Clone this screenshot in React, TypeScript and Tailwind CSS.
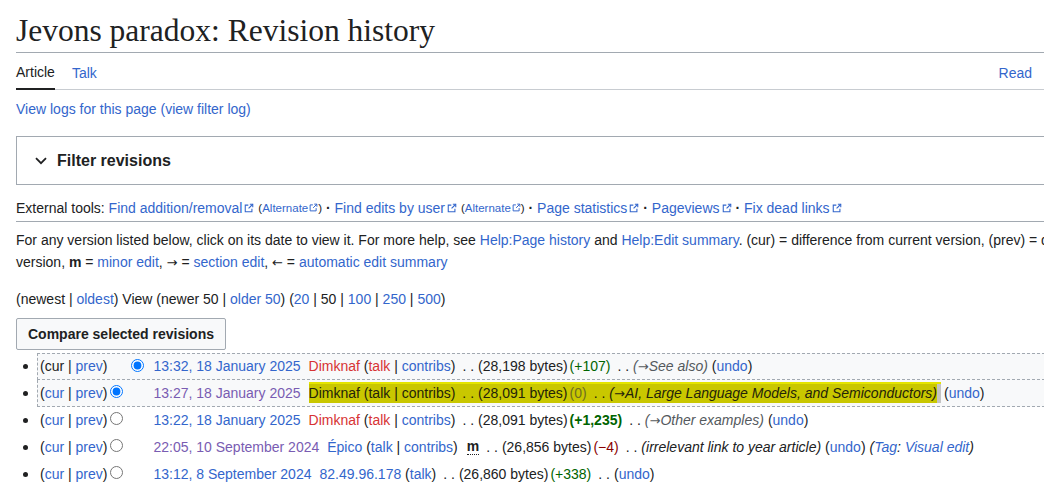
import React from "react";

const LINK = "text-[#3366cc]";
const VISITED = "text-[#795cb2]";
const RED = "text-[#d73333]";

function ExtIcon({ small }: { small?: boolean }) {
  return (
    <svg
      viewBox="0 0 12 12"
      className={small ? "inline-block w-[9px] h-[9px] ml-[1px] align-baseline" : "inline-block w-[10px] h-[10px] ml-[2px] align-baseline"}
      fill="none"
      stroke="#3366cc"
      strokeWidth="1.3"
    >
      <path d="M9.5 6.8V10.5H1.5V2.5H5.2" />
      <path d="M7 1.5H10.5V5" />
      <path d="M10.5 1.5L5.5 6.5" />
    </svg>
  );
}

function Arrow({ left }: { left?: boolean }) {
  return <span className="font-['DejaVu_Sans',sans-serif] text-[13px] not-italic">{left ? "←" : "→"}</span>;
}

function Sep() {
  return <span className="ml-[7px] mr-[4px]">. .</span>;
}

function Radios({ v1, c1, v2, c2 }: { v1: boolean; c1?: boolean; v2: boolean; c2?: boolean }) {
  return (
    <>
      <input
        type="radio"
        name="oldid"
        defaultChecked={c1}
        className={v1 ? "m-0 ml-[3px] w-[13px] h-[13px] -mt-[3px]" : "m-0 ml-[3px] w-[13px] h-[13px] invisible"}
      />
      <input
        type="radio"
        name="diff"
        defaultChecked={c2}
        className={v2 ? "m-0 ml-[8px] w-[13px] h-[13px] -mt-[3px]" : "m-0 ml-[8px] w-[13px] h-[13px] invisible"}
      />
    </>
  );
}

function Bullet() {
  return (
    <div className="w-[21px] shrink-0 flex items-center">
      <span className="ml-[7px] w-[5px] h-[5px] rounded-full bg-[#202122]" />
    </div>
  );
}

export default function App() {
  return (
    <div className="w-[1044px] h-[491px] overflow-hidden bg-white font-['Liberation_Sans',Arial,sans-serif] text-[14px] text-[#202122]">
      <div className="pl-4 w-[1200px]">
        {/* heading */}
        <h1 className="mt-[13px] pb-[3px] leading-[36px] text-[31.5px] font-normal font-['Liberation_Serif','DejaVu_Serif',serif] border-b border-[#a2a9b1] w-[1028px]">
          Jevons paradox: Revision history
        </h1>

        {/* tabs */}
        <div className="flex items-stretch h-[37px] border-b border-[#c8ccd1] w-[1028px] pr-3">
          <div className="flex items-center pt-[4px] border-b-2 border-[#202122] -mb-px relative">Article</div>
          <div className={"flex items-center pt-[4px] ml-[17px] " + LINK}>Talk</div>
          <div className={"flex items-center pt-[4px] ml-auto " + LINK}>Read</div>
        </div>

        <div className={"mt-[8px] leading-[22px] " + LINK}>View logs for this page (view filter log)</div>

        {/* filter box */}
        <div className="mt-[16px] h-[49px] border border-[#a2a9b1] flex items-center pl-[18px]">
          <svg viewBox="0 0 12 8" className="w-[12px] h-[8px]" fill="none" stroke="#202122" strokeWidth="1.8">
            <path d="M1 1.2L6 6.2L11 1.2" />
          </svg>
          <span className="ml-[10px] font-bold text-[16px]">Filter revisions</span>
        </div>

        {/* external tools */}
        <div className="mt-[12px] leading-[22px] pb-[2px] border-b border-[#a2a9b1] whitespace-nowrap">
          External tools: <a className={LINK}>Find addition/removal</a>
          <ExtIcon />{" "}
          <sup className="text-[11.5px] relative -top-[1px]">
            (<a className={LINK}>Alternate</a>
            <ExtIcon small />)
          </sup>{" "}
          <b>·</b> <a className={LINK}>Find edits by user</a>
          <ExtIcon />{" "}
          <sup className="text-[11.5px] relative -top-[1px]">
            (<a className={LINK}>Alternate</a>
            <ExtIcon small />)
          </sup>{" "}
          <b>·</b> <a className={LINK}>Page statistics</a>
          <ExtIcon /> <b>·</b> <a className={LINK}>Pageviews</a>
          <ExtIcon /> <b>·</b> <a className={LINK}>Fix dead links</a>
          <ExtIcon />
        </div>

        {/* help paragraph */}
        <div className="mt-[7px] leading-[22px] whitespace-nowrap">
          <div>
            For any version listed below, click on its date to view it. For more help, see{" "}
            <a className={LINK}>Help:Page history</a> and <a className={LINK}>Help:Edit summary</a>. (cur) = difference
            from current version, (prev) = difference from preceding
          </div>
          <div>
            version, <b>m</b> = <a className={LINK}>minor edit</a>, <Arrow /> = <a className={LINK}>section edit</a>,{" "}
            <Arrow left /> = <a className={LINK}>automatic edit summary</a>
          </div>
        </div>

        {/* pagination */}
        <div className="mt-[14px] leading-[22px] whitespace-nowrap">
          (newest | <a className={LINK}>oldest</a>) View (newer 50 | <a className={LINK}>older 50</a>) (
          <a className={LINK}>20</a> | 50 | <a className={LINK}>100</a> | <a className={LINK}>250</a> |{" "}
          <a className={LINK}>500</a>)
        </div>

        <button className="mt-[8px] h-[32px] px-[11px] border border-[#a2a9b1] rounded-[2px] bg-[#f8f9fa] font-bold text-[14px] text-[#202122]">
          Compare selected revisions
        </button>

        {/* history list */}
        <ul className="mt-[3px] whitespace-nowrap">
          <li className="flex">
            <Bullet />
            <div className="flex-1 h-[27px] flex items-center pl-[2px] border border-dashed border-[#a2a9b1] bg-[#f8f9fa]">
              <span>
                (cur | <a className={LINK}>prev</a>)
              </span>
              <Radios v1={false} v2={true} c2 />
              <a className={"ml-[9px] " + LINK}>13:32, 18 January 2025</a>
              <span className="ml-[8px]">
                <a className={RED}>Dimknaf</a> (<a className={RED}>talk</a> | <a className={LINK}>contribs</a>)
              </span>
              <Sep />
              <span>(28,198 bytes)</span>
              <span className="ml-[2px] text-[#006400]">(+107)</span>
              <Sep />
              <span className="italic text-[#54595d]">
                (<Arrow />See also)
              </span>
              <span className="ml-[4px]">
                (<a className={LINK}>undo</a>)
              </span>
            </div>
          </li>
          <li className="flex">
            <Bullet />
            <div className="flex-1 h-[27px] flex items-center pl-[2px] border-x border-b border-dashed border-[#a2a9b1] bg-[#f8f9fa]">
              <span>
                (<a className={LINK}>cur</a> | <a className={LINK}>prev</a>)
              </span>
              <Radios v1={true} c1 v2={false} />
              <a className={"ml-[9px] " + VISITED}>13:27, 18 January 2025</a>
              <span className="ml-[8px] flex items-center h-[19px] bg-[#c9c700] border-r-4 border-[#c4c4c4] text-[#23230a] shadow-[0_-2px_0_0_#e4e400]">
                <span>Dimknaf (talk | contribs)</span>
                <Sep />
                <span>(28,091 bytes)</span>
                <span className="ml-[2px] text-[#6e6d22]">(0)</span>
                <Sep />
                <span className="italic">
                  (<Arrow />AI, Large Language Models, and Semiconductors)
                </span>
              </span>
              <span className="ml-[3px]">
                (<a className={LINK}>undo</a>)
              </span>
            </div>
          </li>
          <li className="flex">
            <Bullet />
            <div className="flex-1 h-[27px] flex items-center pl-[2px] border-x border-b border-transparent">
              <span>
                (<a className={LINK}>cur</a> | <a className={LINK}>prev</a>)
              </span>
              <Radios v1={true} v2={false} />
              <a className={"ml-[9px] " + LINK}>13:22, 18 January 2025</a>
              <span className="ml-[8px]">
                <a className={RED}>Dimknaf</a> (<a className={RED}>talk</a> | <a className={LINK}>contribs</a>)
              </span>
              <Sep />
              <span>(28,091 bytes)</span>
              <span className="ml-[2px] text-[#006400] font-bold">(+1,235)</span>
              <Sep />
              <span className="italic text-[#54595d]">
                (<Arrow />Other examples)
              </span>
              <span className="ml-[4px]">
                (<a className={LINK}>undo</a>)
              </span>
            </div>
          </li>
          <li className="flex">
            <Bullet />
            <div className="flex-1 h-[27px] flex items-center pl-[2px] border-x border-b border-transparent">
              <span>
                (<a className={LINK}>cur</a> | <a className={LINK}>prev</a>)
              </span>
              <Radios v1={true} v2={false} />
              <a className={"ml-[9px] " + VISITED}>22:05, 10 September 2024</a>
              <span className="ml-[8px]">
                <a className={LINK}>Épico</a> (<a className={LINK}>talk</a> | <a className={LINK}>contribs</a>)
              </span>
              <abbr className="ml-[9px] font-bold no-underline border-b border-dotted border-[#202122] leading-[15px]">m</abbr>
              <Sep />
              <span>(26,856 bytes)</span>
              <span className="ml-[2px] text-[#8b0000]">(−4)</span>
              <Sep />
              <span className="italic">(irrelevant link to year article)</span>
              <span className="ml-[4px]">
                (<a className={LINK}>undo</a>)
              </span>
              <span className="ml-[4px] italic">
                (<a className={LINK}>Tag</a>: <a className={LINK}>Visual edit</a>)
              </span>
            </div>
          </li>
          <li className="flex">
            <Bullet />
            <div className="flex-1 h-[27px] flex items-center pl-[2px] border-x border-b border-transparent">
              <span>
                (<a className={LINK}>cur</a> | <a className={LINK}>prev</a>)
              </span>
              <Radios v1={true} v2={false} />
              <a className={"ml-[9px] " + LINK}>13:12, 8 September 2024</a>
              <span className="ml-[8px]">
                <a className={LINK}>82.49.96.178</a> (<a className={LINK}>talk</a>)
              </span>
              <Sep />
              <span>(26,860 bytes)</span>
              <span className="ml-[2px] text-[#006400]">(+338)</span>
              <Sep />
              <span>
                (<a className={LINK}>undo</a>)
              </span>
            </div>
          </li>
        </ul>
      </div>
    </div>
  );
}
